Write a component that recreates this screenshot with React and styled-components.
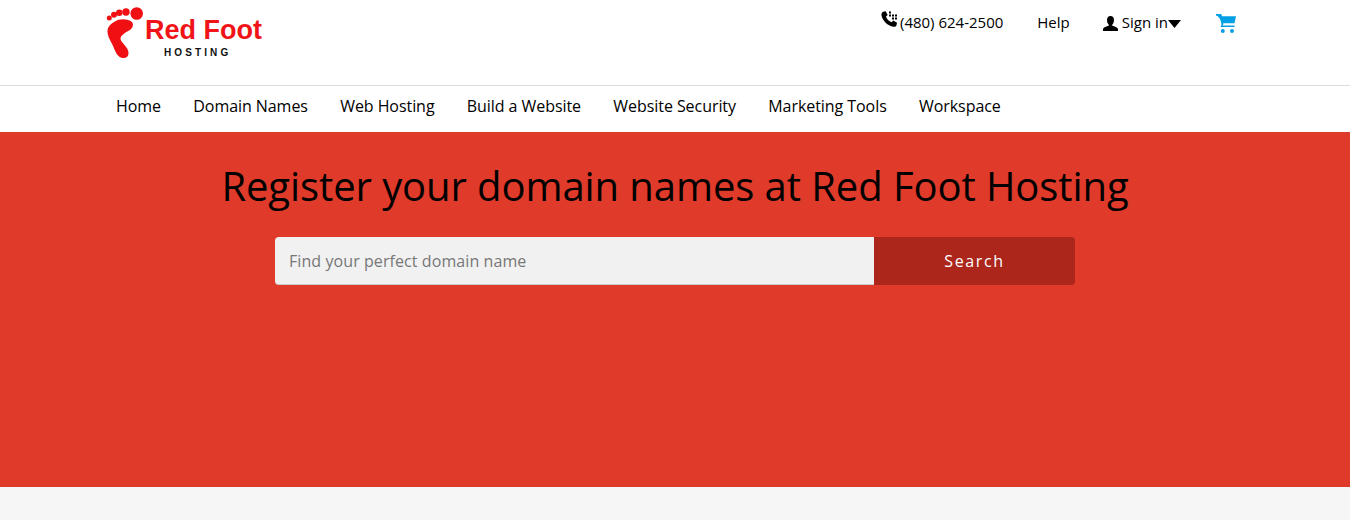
import React from 'react';
import styled, { createGlobalStyle } from 'styled-components';

const Global = createGlobalStyle`
  html, body { margin: 0; padding: 0; background: #f6f6f6; }
  body { font-family: "Open Sans", "Liberation Sans", sans-serif; color: #000; }
  * { box-sizing: border-box; }
`;
const Page = styled.div`width: 1350px; height: 520px; overflow: hidden; background: #f6f6f6;`;
const Header = styled.header`
  height: 86px; background: #fff; border-bottom: 1px solid #dcdcdc;
  display: flex; justify-content: space-between; align-items: flex-start;
  padding: 0 114px 0 106px;
`;
const Logo = styled.a`display: flex; align-items: flex-start; padding-top: 7px; text-decoration: none;`;
const LogoText = styled.div`
  display: flex; flex-direction: column; align-items: flex-start; margin-left: 2px; padding-top: 9px;
`;
const Brand = styled.span`
  font: 700 27px/28px "Liberation Sans", Arial, sans-serif; color: #f01418; white-space: nowrap;
`;
const Tag = styled.span`
  font: 700 10px/12px "Liberation Sans", Arial, sans-serif; letter-spacing: 3.1px; color: #111; margin: 3px 0 0 19px;
`;
const Utility = styled.div`display: flex; align-items: center; height: 44px; font-size: 15px;`;
const UtilItem = styled.a`
  display: flex; align-items: center; color: #000; text-decoration: none; margin-left: ${p => p.$gap || 0}px; white-space: nowrap;
`;
const Nav = styled.nav`
  height: 46px; background: #fff; display: flex; align-items: center; gap: 32.3px; padding: 0 0 6px 116px; font-size: 16px;
`;
const NavLink = styled.a`color: #000; text-decoration: none; white-space: nowrap; letter-spacing: -0.06px;`;
const Hero = styled.section`
  height: 355px; background: #df3a2a; display: flex; flex-direction: column; align-items: center; padding-top: 29px;
`;
const Title = styled.h1`
  margin: 0; font-size: 40px; line-height: 50px; font-weight: 400; color: #000; white-space: nowrap; letter-spacing: -0.08px;
`;
const Search = styled.form`display: flex; width: 800px; height: 48px; margin-top: 26px;`;
const Input = styled.input`
  width: 599px; height: 48px; border: 0; border-bottom: 1px solid #ccc; border-radius: 4px 0 0 4px; background: #f1f1f1;
  padding: 0 14px; font: 400 16px "Open Sans", sans-serif; letter-spacing: 0.08px; color: #333; outline: 0;
  &::placeholder { color: #777; opacity: 1; }
`;
const Button = styled.button`
  flex: 1; border: 0; border-radius: 0 4px 4px 0; background: #ac261b; color: #fff; font: 400 16px "Open Sans", sans-serif; letter-spacing: 1.6px; padding: 0;
`;

const FootIcon = () => (
  <svg width="37" height="52" viewBox="0 0 37 52" fill="#f01014">
    <circle cx="30.700" cy="6.500" r="6.300" />
    <circle cx="20" cy="5" r="3.700" />
    <circle cx="13.300" cy="5.700" r="3.300" />
    <circle cx="8" cy="7.700" r="3" />
    <circle cx="3.300" cy="11" r="2.500" />
    <path d="M9 14.500C13 11.500 22 11.500 26 15C28 18 26.500 21 24 23C19 26 14.500 28 14.500 32C15 36 22.500 40 22.500 46C22.500 50 20 51 17 51C12 51 9.500 45 7.500 40C4.500 33 1.500 30 1.500 24C1.500 20 5 16.500 9 14.500Z" />
  </svg>
);
const Phone = () => (
  <svg width="17" height="17" viewBox="0 0 17 17" fill="#000" style={{ marginRight: 2, marginTop: -5 }}>
    <path d="M2 .7 4.600.2 6.700 4 5 5.600C5.600 7.900 8 10.500 10.600 11.200L12.300 9.500 16 11.700 15.500 14.300C15 15.800 13.800 16 12.500 15.800 6.500 14.800 1.600 9.600.5 4.500.2 3 .7 1.500 2 .7Z" />
    <path d="M8 .5h2v2H8zM8 3.500h2v2H8zM11 3.500h2v2h-2zM14 3.500h2v2h-2zM11 6.500h2v2h-2zM14 6.500h2v2h-2z" />
  </svg>
);
const Person = () => (
  <svg width="15" height="15" viewBox="0 0 15 15" fill="#000" style={{ marginRight: 4, marginTop: 2 }}>
    <path d="M7.500 0C10 0 11 1.800 11 4 11 6 10.300 7.600 9.300 8.500V9.800C11.500 10.500 15 11.300 15 13.500V15H0V13.500C0 11.300 3.500 10.500 5.700 9.800V8.500C4.700 7.600 4 6 4 4 4 1.800 5 0 7.500 0Z" />
  </svg>
);
const Caret = () => (
  <svg width="13" height="8" viewBox="0 0 13 8" fill="#000" style={{ marginTop: 3 }}>
    <path d="M0 0H13L6.500 8Z" />
  </svg>
);
const Cart = () => (
  <svg width="21" height="19" viewBox="0 0 21 19" fill="#049fe4" style={{ marginTop: 2 }}>
    <path d="M1 0H6L7 2.200H21L19.500 9.200H8.500Z" />
    <path d="M6 0 8.500 10 7.500 11.500H19.500V13H5.500L6.500 10.500 4.500 1.800H1V0Z" />
    <circle cx="7.800" cy="17" r="2" />
    <circle cx="17" cy="17" r="2" />
  </svg>
);

export default function App() {
  return (
    <Page>
      <Global />
      <Header>
        <Logo href="#">
          <FootIcon />
          <LogoText>
            <Brand>Red Foot</Brand>
            <Tag>HOSTING</Tag>
          </LogoText>
        </Logo>
        <Utility>
          <UtilItem><Phone />(480) 624-2500</UtilItem>
          <UtilItem $gap={34}>Help</UtilItem>
          <UtilItem $gap={33}><Person />Sign in<Caret /></UtilItem>
          <UtilItem $gap={34}><Cart /></UtilItem>
        </Utility>
      </Header>
      <Nav>
        {['Home', 'Domain Names', 'Web Hosting', 'Build a Website', 'Website Security', 'Marketing Tools', 'Workspace'].map(t => (
          <NavLink href="#" key={t}>{t}</NavLink>
        ))}
      </Nav>
      <Hero>
        <Title>Register your domain names at Red Foot Hosting</Title>
        <Search>
          <Input placeholder="Find your perfect domain name" />
          <Button type="button">Search</Button>
        </Search>
      </Hero>
    </Page>
  );
}
